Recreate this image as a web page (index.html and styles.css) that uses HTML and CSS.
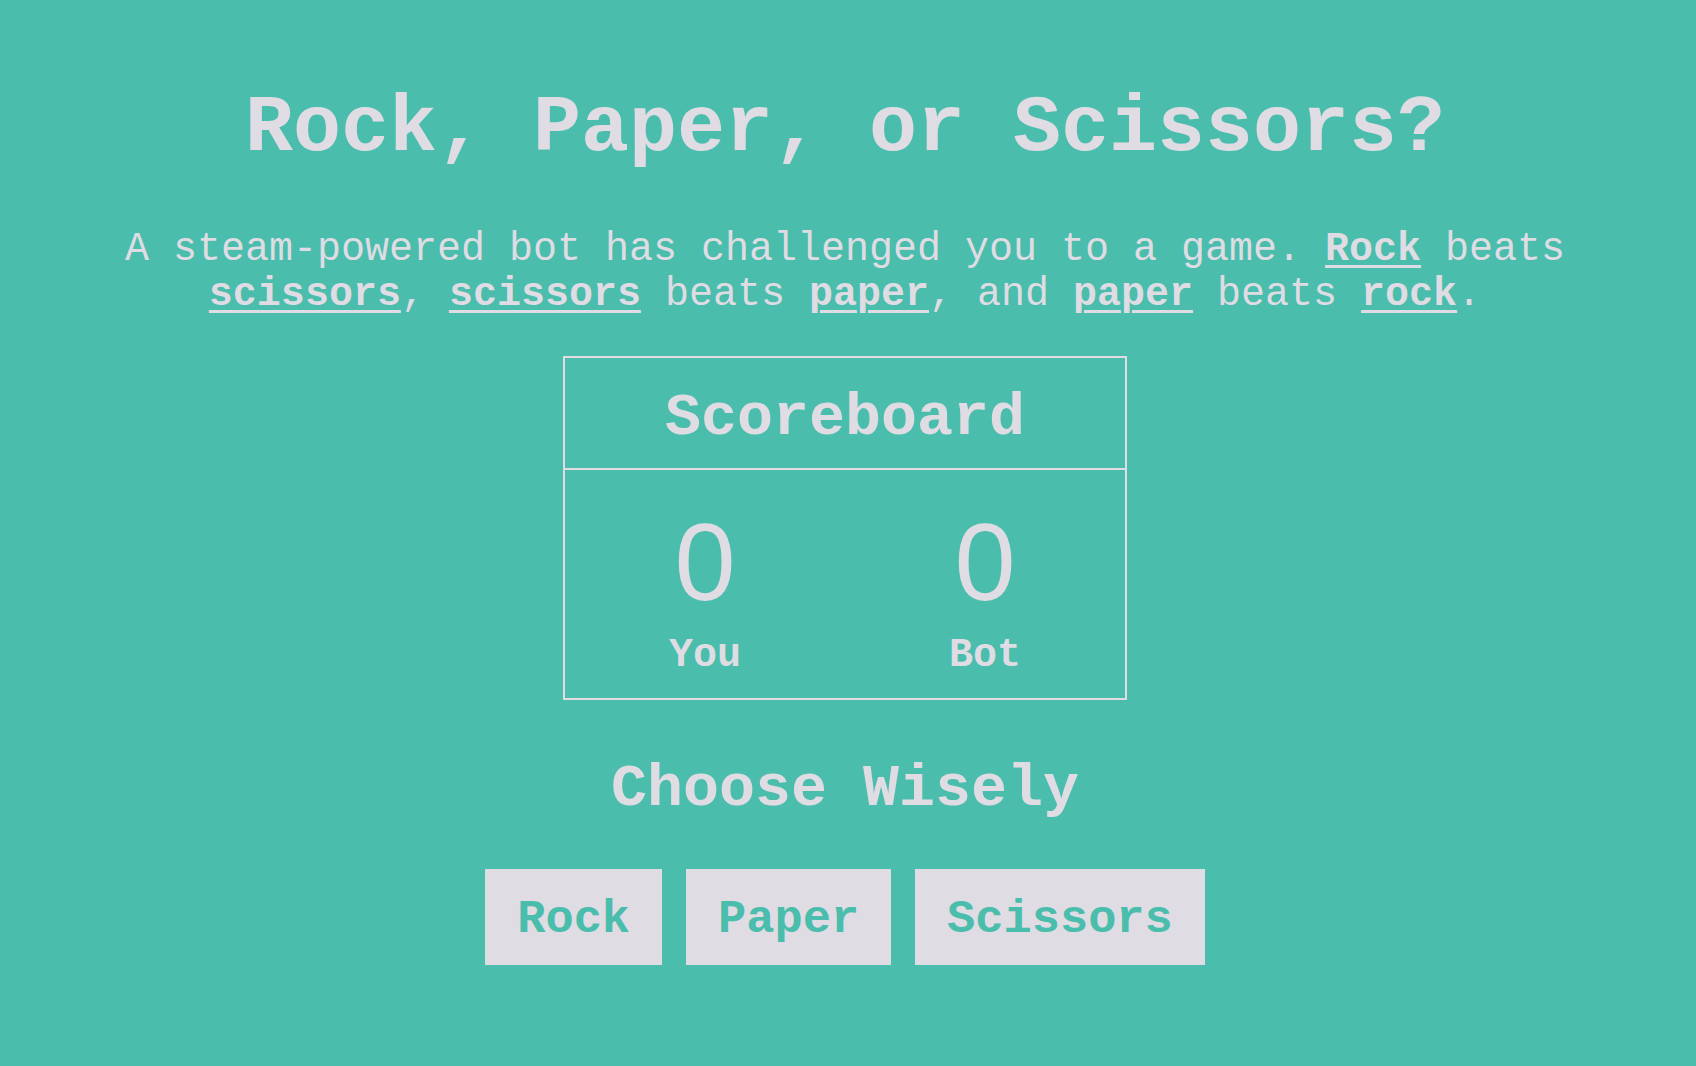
FILE: index.html
```html
<!DOCTYPE html>
<html lang="en">
<head>
<meta charset="utf-8">
<title>Rock, Paper, or Scissors?</title>
<link rel="stylesheet" href="styles.css">
</head>
<body>
<main class="page">
  <h1 class="title">Rock, Paper, or Scissors?</h1>
  <p class="intro">A steam-powered bot has challenged you to a game. <u class="kw">Rock</u> beats <u class="kw">scissors</u>, <u class="kw">scissors</u> beats <u class="kw">paper</u>, and <u class="kw">paper</u> beats <u class="kw">rock</u>.</p>
  <section class="scoreboard">
    <h2 class="scoreboard-title">Scoreboard</h2>
    <div class="scores">
      <div class="score">
        <div class="score-num">0</div>
        <div class="score-label">You</div>
      </div>
      <div class="score">
        <div class="score-num">0</div>
        <div class="score-label">Bot</div>
      </div>
    </div>
  </section>
  <h2 class="choose">Choose Wisely</h2>
  <div class="choices">
    <button class="choice">Rock</button>
    <button class="choice">Paper</button>
    <button class="choice">Scissors</button>
  </div>
</main>
</body>
</html>
```
FILE: styles.css
```css
html, body {
  margin: 0;
  padding: 0;
  background: #4abdac;
}
body {
  color: #dfdce3;
  font-family: "Liberation Mono", "Courier New", monospace;
}
.page {
  display: flex;
  flex-direction: column;
  align-items: center;
  padding: 83px 6px 0 0;
  text-align: center;
}
.title {
  margin: 0;
  font-size: 80px;
  font-weight: bold;
  line-height: normal;
}
.intro {
  margin: 53px 0 0;
  max-width: 1500px;
  font-size: 40px;
  line-height: normal;
}
.kw {
  font-weight: bold;
  text-decoration-thickness: 3px;
  text-underline-offset: 5px;
}
.scoreboard {
  margin-top: 39px;
  width: 564px;
  box-sizing: border-box;
  border: 2px solid #dfdce3;
}
.scoreboard-title {
  margin: 0;
  padding: 26px 0 16px;
  font-size: 60px;
  line-height: normal;
  font-weight: bold;
  border-bottom: 2px solid #dfdce3;
}
.scores {
  display: grid;
  grid-template-columns: 1fr 1fr;
  padding: 37px 0 20px;
}
.score {
  display: flex;
  flex-direction: column;
  align-items: center;
}
.score-num {
  font-family: "Liberation Sans", Arial, Helvetica, sans-serif;
  font-size: 110px;
  line-height: 110px;
  font-weight: normal;
}
.score-label {
  margin-top: 16px;
  font-size: 40px;
  line-height: normal;
  font-weight: bold;
}
.choose {
  margin: 55px 0 0;
  font-size: 60px;
  line-height: normal;
  font-weight: bold;
}
.choices {
  display: flex;
  gap: 24px;
  margin-top: 46px;
}
.choice {
  border: none;
  margin: 0;
  padding: 24px 32px 19px;
  background: #dfdce3;
  color: #4abdac;
  font-family: "Liberation Mono", "Courier New", monospace;
  font-size: 47px;
  line-height: normal;
  font-weight: bold;
  cursor: pointer;
}
```
